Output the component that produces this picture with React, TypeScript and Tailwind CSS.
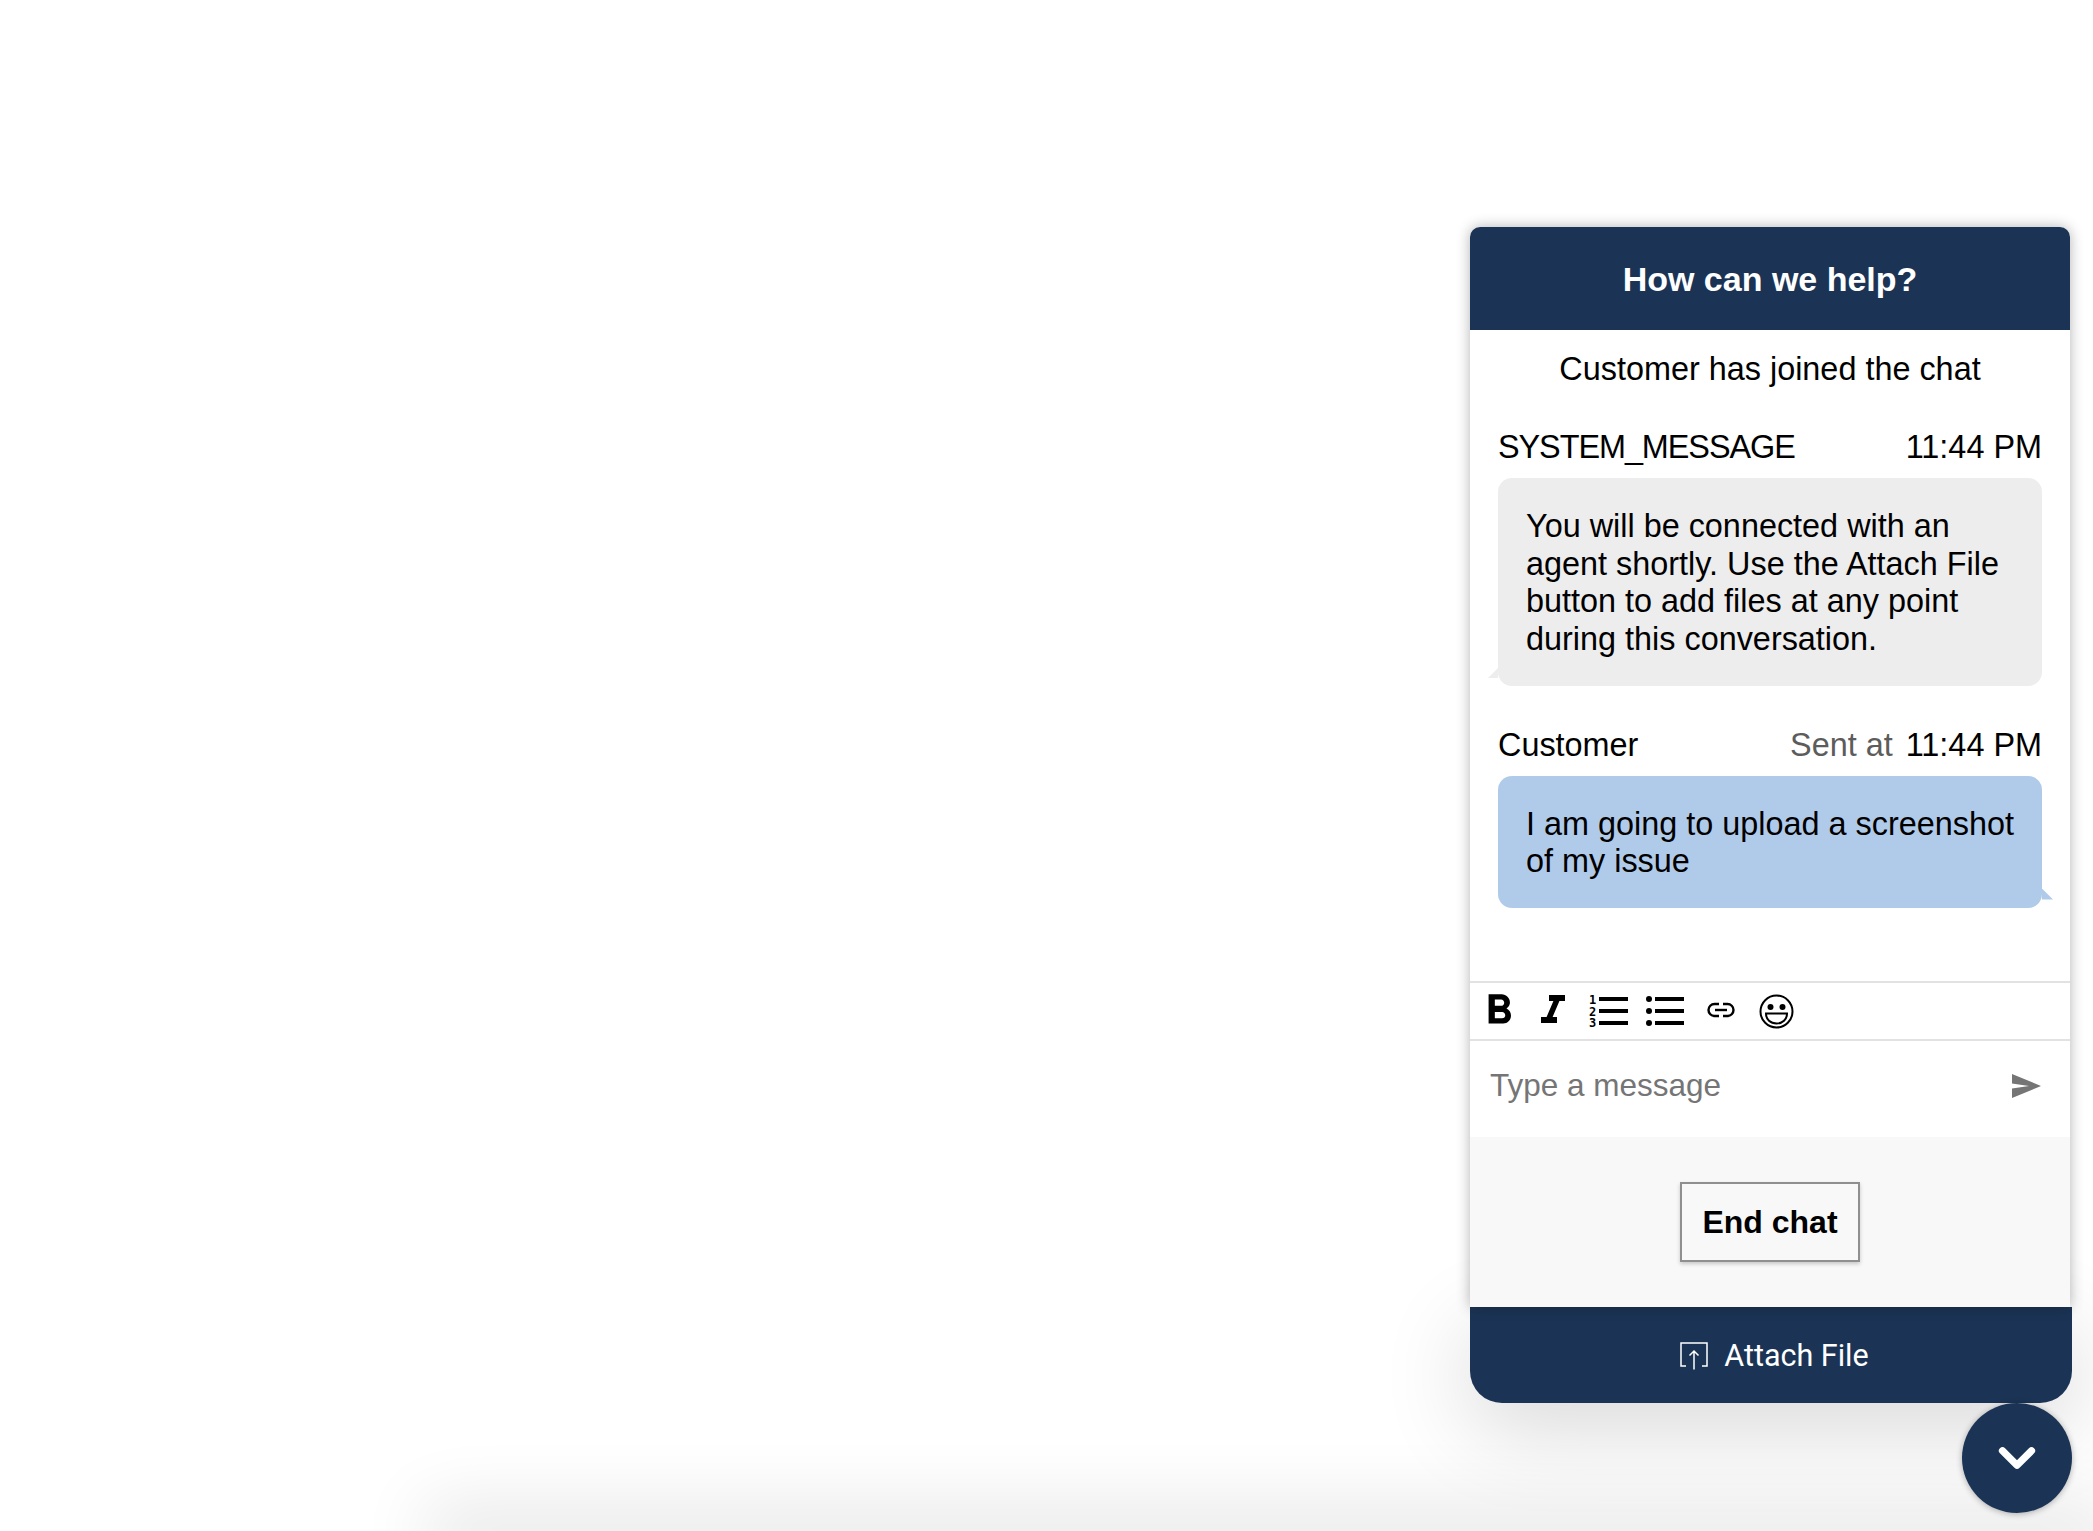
import { MdFormatBold, MdFormatItalic } from "react-icons/md";
import { ChevronDown } from "lucide-react";

function OrderedListIcon() {
  return (
    <svg width="39" height="34" viewBox="0 0 39 34" fill="#000" className="overflow-visible">
      <text x="0" y="10" fontSize="12" fontWeight="700" fontFamily="'DejaVu Sans Mono', monospace">1</text>
      <text x="0" y="22" fontSize="12" fontWeight="700" fontFamily="'DejaVu Sans Mono', monospace">2</text>
      <text x="0" y="33" fontSize="12" fontWeight="700" fontFamily="'DejaVu Sans Mono', monospace">3</text>
      <rect x="10" y="3" width="29" height="4" />
      <rect x="10" y="15" width="29" height="4" />
      <rect x="10" y="27" width="29" height="4" />
    </svg>
  );
}

function BulletListIcon() {
  return (
    <svg width="38" height="34" viewBox="0 0 38 34" fill="#000">
      <circle cx="3" cy="5" r="3" />
      <circle cx="3" cy="17" r="3" />
      <circle cx="3" cy="29" r="3" />
      <rect x="9" y="3" width="29" height="4" />
      <rect x="9" y="15" width="29" height="4" />
      <rect x="9" y="27" width="29" height="4" />
    </svg>
  );
}

function LinkIcon() {
  return (
    <svg width="28" height="18" viewBox="0 0 28 18" fill="none" stroke="#000" strokeWidth="2.4">
      <path d="M12 3H7.5a6 6 0 0 0 0 12H12" />
      <path d="M16 3h4.5a6 6 0 0 1 0 12H16" />
      <path d="M8 9h12" />
    </svg>
  );
}

function SmileIcon() {
  return (
    <svg width="35" height="35" viewBox="0 0 35 35">
      <circle cx="17.5" cy="17.5" r="16" fill="none" stroke="#000" strokeWidth="2" />
      <circle cx="11.5" cy="13" r="3" />
      <circle cx="23.5" cy="13" r="3" />
      <path d="M7 19.5h21c0 6-4.5 10-10.500 10S7 25.500 7 19.500z" fill="none" stroke="#000" strokeWidth="2" />
    </svg>
  );
}

function SendIcon() {
  return (
    <svg width="29" height="24" viewBox="0 0 29 24" fill="#757575">
      <path d="M0 0l29 12L0 24l0-9.500 17-2.500-17-2.500z" />
    </svg>
  );
}

function UploadIcon() {
  return (
    <svg width="28" height="28" viewBox="0 0 28 28" fill="none" stroke="#fff" strokeWidth="1.500">
      <path d="M6 24H1V1h26v23h-5" />
      <path d="M14 27.500V9M9.500 13.500L14 9l4.500 4.500" />
    </svg>
  );
}

export default function App() {
  return (
    <div className="relative flex h-screen flex-col items-end overflow-hidden bg-white pr-[23px] pt-[227px] font-['Liberation_Sans',sans-serif] text-[32.400px] leading-[37.5px] text-black">
      {/* soft shadow coming up from the page bottom */}
      <div className="absolute left-[450px] right-0 top-full h-[2px] shadow-[0_0_70px_25px_rgba(0,0,0,0.11)]" />

      <div className="relative w-[600px]">
        <div className="relative z-10 overflow-hidden rounded-t-[10px] shadow-[0_0_14px_rgba(0,0,0,0.3)]">
          <header className="flex h-[103px] items-center justify-center bg-[#1b3455] pt-[2px] text-[34px] font-bold text-white">
            How can we help?
          </header>

          {/* Transcript */}
          <section className="h-[651px] bg-white px-[28px] pt-[21px]">
            <p className="text-center">Customer has joined the chat</p>

            <div className="mt-[40px] flex justify-between">
              <span className="tracking-[-1.050px]">SYSTEM_MESSAGE</span>
              <span>11:44 PM</span>
            </div>
            <div className="relative mt-[12px] rounded-[14px] bg-[#ededed] pb-[28px] pl-[28px] pr-[24px] pt-[30px]">
              You will be connected with an agent shortly. Use the Attach File button to add files at any point during this conversation.
              <span className="absolute -left-[10px] bottom-[8px] h-[10px] w-[10px] bg-[#ededed] [clip-path:polygon(100%_0,0_100%,100%_100%)]" />
            </div>

            <div className="mt-[41px] flex justify-between">
              <span>Customer</span>
              <span>
                <span className="mr-[13px] text-[#5c5c5c]">Sent at</span>
                11:44 PM
              </span>
            </div>
            <div className="relative mt-[11px] rounded-[14px] bg-[#b0cbea] pb-[27px] pl-[28px] pr-[24px] pt-[30px]">
              I am going to upload a screenshot of my issue
              <span className="absolute -right-[11px] bottom-[8px] h-[11px] w-[11px] bg-[#b0cbea] [clip-path:polygon(0_0,0_100%,100%_100%)]" />
            </div>
          </section>

          {/* Toolbar */}
          <div className="flex h-[60px] items-center border-y-2 border-[#e2e2e2] bg-white">
            <MdFormatBold className="ml-[4px] size-[50px]" />
            <MdFormatItalic className="ml-[5px] size-[48px]" />
            <span className="ml-[12px]"><OrderedListIcon /></span>
            <span className="ml-[18px]"><BulletListIcon /></span>
            <span className="ml-[23px] -mt-[2px]"><LinkIcon /></span>
            <span className="ml-[24px]"><SmileIcon /></span>
          </div>

          {/* Input */}
          <div className="flex h-[96px] items-center justify-between bg-white pb-[7px] pl-[20px] pr-[29px] text-[31.500px] text-[#757575]">
            <span>Type a message</span>
            <SendIcon />
          </div>

          {/* End chat */}
          <div className="flex h-[170px] items-center justify-center bg-[#f8f8f8]">
            <button className="h-[80px] w-[180px] border-2 border-[#8f8f8f] bg-[#f8f8f8] pt-[2px] text-[32px] font-bold shadow-[0_2px_4px_rgba(0,0,0,0.2)]">
              End chat
            </button>
          </div>
        </div>

        {/* Attach bar */}
        <div className="relative -mr-[2px] flex h-[96px] items-center justify-center gap-[16px] rounded-b-[32px] bg-[#1b3455] pl-[7px] pt-[2px] font-['Roboto',sans-serif] text-[30.500px] text-white shadow-[0_25px_90px_rgba(0,0,0,0.16)]">
          <UploadIcon />
          Attach File
        </div>
      </div>

      <button className="relative -mr-[2px] flex size-[110px] items-center justify-center rounded-full bg-[#1b3455] text-white shadow-[0_1px_6px_rgba(0,0,0,0.3)]">
        <ChevronDown className="size-[58px]" strokeWidth={3} />
      </button>
    </div>
  );
}
